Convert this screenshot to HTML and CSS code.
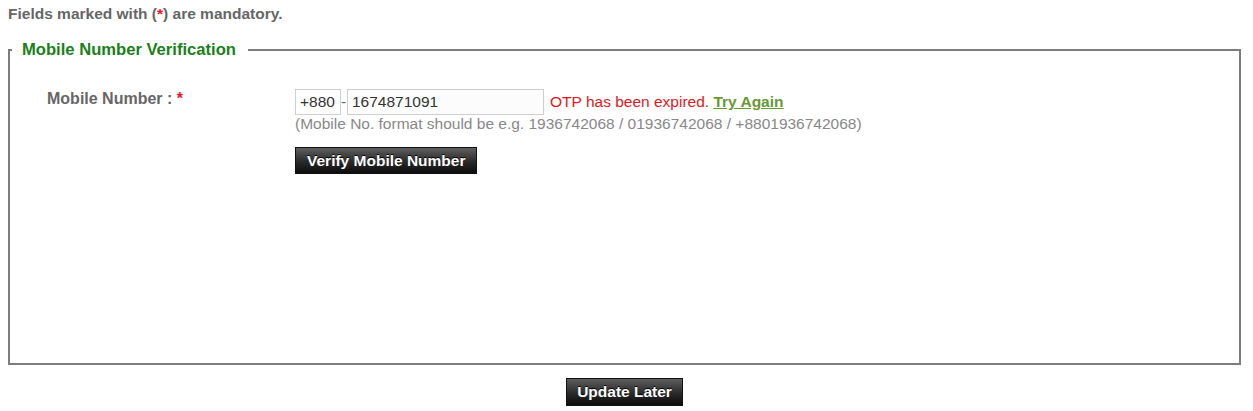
FILE: index.html
```html
<!DOCTYPE html>
<html lang="en">
<head>
<meta charset="utf-8">
<title>Mobile Number Verification</title>
<link rel="stylesheet" href="styles.css">
</head>
<body>
<p class="note">Fields marked with (<span class="req">*</span>) are mandatory.</p>
<fieldset class="box">
  <legend class="box-title">Mobile Number Verification</legend>
  <div class="row">
    <div class="label">Mobile Number : <span class="req">*</span></div>
    <div class="field">
      <div class="inputs"><input class="inp code" type="text" value="+880"><span class="dash">-</span><input class="inp num" type="text" value="1674871091"><span class="msg"><span class="err">OTP has been expired.</span> <a class="retry" href="#">Try Again</a></span></div>
      <div class="hint">(Mobile No. format should be e.g. 1936742068 / 01936742068 / +8801936742068)</div>
      <button class="btn verify" type="button">Verify Mobile Number</button>
    </div>
  </div>
</fieldset>
<div class="actions"><button class="btn later" type="button">Update Later</button></div>
</body>
</html>
```

FILE: styles.css
```css
html, body {
  background: #fff;
}
body {
  margin: 0 12px 0 8px;
  font-family: "Liberation Sans", Arial, sans-serif;
  font-size: 15.5px;
  color: #666;
}
.note {
  margin: 5px 0 0;
  line-height: 18px;
  font-size: 15.5px;
  font-weight: bold;
  color: #666;
}
.req {
  color: #e3161c;
}
.box {
  margin: 17px 0 0;
  padding: 30px 0 0;
  border: 2px solid #7c7c7c;
  min-width: 0;
}
.box-title {
  margin-left: 2px;
  padding: 0 12px 0 10px;
  font-size: 16.6px;
  line-height: 19px;
  font-weight: bold;
  color: #1a801a;
}
.row {
  display: grid;
  grid-template-columns: 248px 1fr;
  padding-left: 37px;
  min-height: 274px;
  align-content: start;
}
.label {
  padding-top: 1px;
  font-size: 16px;
  line-height: 18px;
  font-weight: bold;
  color: #666;
}
.inputs {
  display: flex;
  align-items: center;
  line-height: 18px;
}
.inp {
  box-sizing: border-box;
  height: 26px;
  margin: 0;
  padding: 0 4px;
  border: 1px solid #cfcfcf;
  background: #fff;
  font-family: "Liberation Sans", Arial, sans-serif;
  font-size: 15.5px;
  color: #333;
  outline: none;
}
.code {
  width: 46px;
}
.num {
  width: 197px;
  background: #fcfcfc;
}
.dash {
  color: #666;
  width: 6px;
}
.msg {
  margin-left: 6px;
  white-space: nowrap;
}
.err {
  color: #e3161c;
}
.retry {
  color: #669933;
  font-weight: bold;
  text-decoration: underline;
}
.hint {
  line-height: 18px;
  color: #888;
}
.btn {
  box-sizing: border-box;
  margin: 0;
  border: 1px solid #111;
  background: linear-gradient(#5e5e5e, #2a2a2a 55%, #0c0c0c);
  color: #fff;
  font-family: "Liberation Sans", Arial, sans-serif;
  font-size: 15.5px;
  font-weight: bold;
  line-height: 18px;
  text-shadow: 0 -1px 0 #000;
  cursor: pointer;
}
.verify {
  margin-top: 14px;
  height: 27px;
  padding: 0 11px;
}
.actions {
  display: flex;
  justify-content: center;
  margin-top: 13px;
}
.later {
  height: 28px;
  padding: 0 10px;
}
```
